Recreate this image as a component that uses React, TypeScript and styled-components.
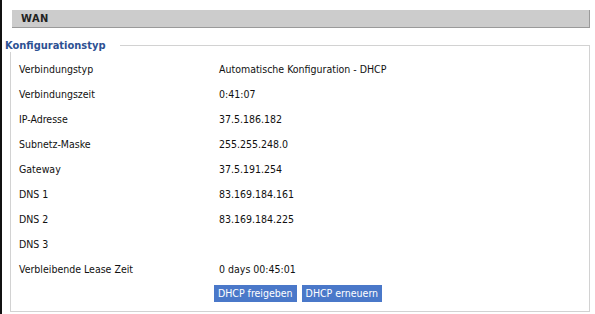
import styled, { createGlobalStyle } from "styled-components";

const FONT = `"DejaVu Sans Condensed", "Liberation Sans", Arial, sans-serif`;

const GlobalStyle = createGlobalStyle`
  html, body {
    margin: 0;
    padding: 0;
    background: #fff;
  }
  body {
    font-family: ${FONT};
    font-size: 10.5px;
    color: #000;
  }
`;

const rows: [string, string][] = [
  ["Verbindungstyp", "Automatische Konfiguration - DHCP"],
  ["Verbindungszeit", "0:41:07"],
  ["IP-Adresse", "37.5.186.182"],
  ["Subnetz-Maske", "255.255.248.0"],
  ["Gateway", "37.5.191.254"],
  ["DNS 1", "83.169.184.161"],
  ["DNS 2", "83.169.184.225"],
  ["DNS 3", ""],
  ["Verbleibende Lease Zeit", "0 days 00:45:01"],
];

export default function App() {
  return (
    <>
      <GlobalStyle />
      <Frame>
        <Header>WAN</Header>
        <Group>
          <Legend>Konfigurationstyp</Legend>
          <InfoTable>
            {rows.map(([label, value]) => (
              <Row key={label}>
                <Cell>{label}</Cell>
                <Cell>{value}</Cell>
              </Row>
            ))}
          </InfoTable>
          <Actions>
            <ActionBtn>DHCP freigeben</ActionBtn>
            <ActionBtn>DHCP erneuern</ActionBtn>
          </Actions>
        </Group>
      </Frame>
    </>
  );
}

const Frame = styled.div`
  height: 314px;
  box-sizing: border-box;
  border-left: 2px solid #111;
  padding: 10px 5px 0 8px;
  display: flex;
  flex-direction: column;
`;

const Header = styled.div`
  height: 18px;
  box-sizing: border-box;
  margin-left: 2px;
  background: #cccccc;
  border-right: 1px solid #9a9a9a;
  border-bottom: 1px solid #9a9a9a;
  padding-left: 9px;
  font-weight: bold;
  font-size: 11px;
  letter-spacing: 0.5px;
  line-height: 17px;
  color: #222;
`;

const Group = styled.fieldset`
  margin: 11px 0 0 0;
  padding: 0;
  border: 1px solid #d2d2d2;
  height: 273px;
  box-sizing: border-box;
`;

const Legend = styled.legend`
  margin-left: -6px;
  padding: 0 15px 0 0;
  font-weight: bold;
  font-size: 11px;
  color: #2d5193;
`;

const InfoTable = styled.div`
  display: flex;
  flex-direction: column;
  padding: 4px 0 0 8px;
`;

const Row = styled.div`
  display: grid;
  grid-template-columns: 200px 1fr;
  height: 25px;
  align-items: center;
`;

const Cell = styled.span`
  color: #111;
`;

const Actions = styled.div`
  display: flex;
  justify-content: center;
  gap: 5px;
  margin-top: 4px;
  padding-right: 4px;
`;

const ActionBtn = styled.button`
  height: 17px;
  padding: 0 4px;
  border: none;
  background: #4a78c9;
  color: #fff;
  font-family: ${FONT};
  font-size: 10.5px;
  line-height: 17px;
  cursor: pointer;
`;
